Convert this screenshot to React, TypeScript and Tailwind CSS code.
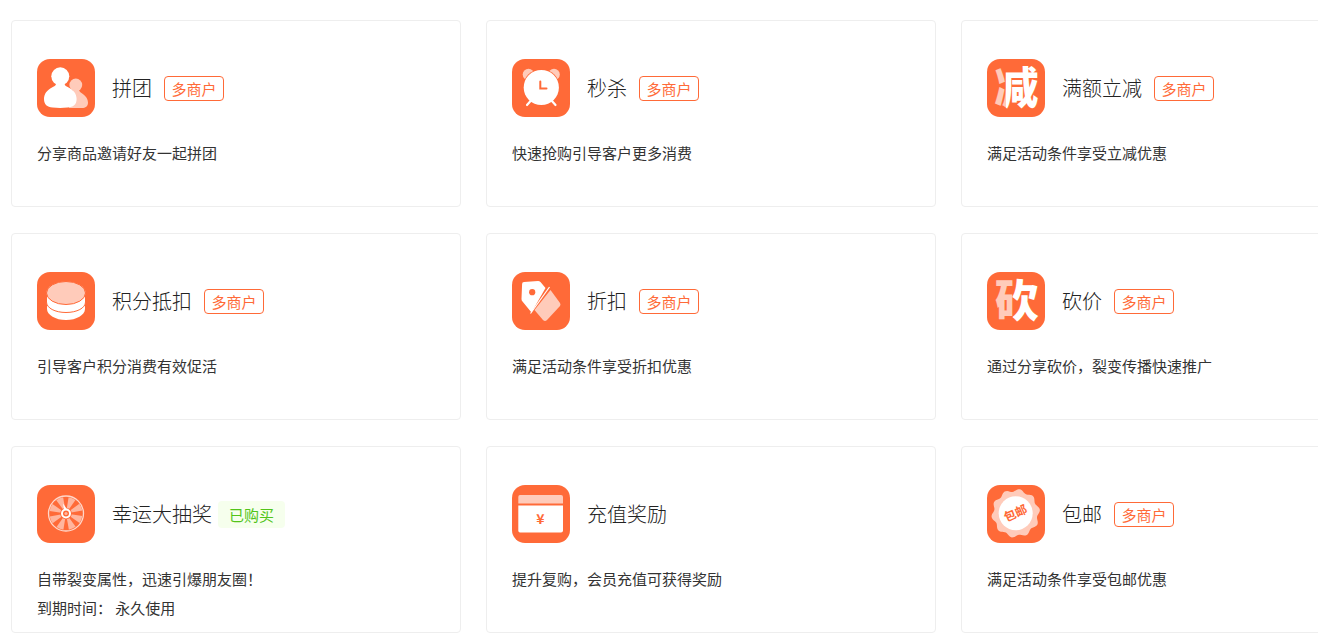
import React from 'react';

type Tag = 'multi' | 'bought';

interface Feature {
    title: string;
    lines: string[];
    icon: React.ReactNode;
    tag?: Tag;
}

// --- Icons ---

const ORANGE = '#ff6a38';
const PINK = '#ffcbba';

const IconTile: React.FC<{ children: React.ReactNode }> = ({ children }) => (
    <svg viewBox="0 0 58 58" className="size-[58px] shrink-0 overflow-visible" aria-hidden="true">
        <rect width="58" height="58" rx="13" fill={ORANGE} />
        {children}
    </svg>
);

const GroupIcon = () => (
    <IconTile>
        <circle cx="38.8" cy="26" r="6.4" fill={PINK} />
        <path d="M36 31h6c0 3 9 5 9 12.500c0 4-2.500 5.500-6 5.500h-13z" fill={PINK} />
        <circle cx="23.300" cy="17.300" r="9" fill="#fff" />
        <path d="M19 23h8.600c0 3.500 0 3.500 4 5.500c5 2.500 8 6.500 8 11.500c0 6-3.500 8-9 8.600q-7.500.8-15 0c-5.500-.6-8.600-3-8.600-8.600c0-5 3-9 8-11.500c4-2 4-2 4-5.500z" fill="#fff" />
    </IconTile>
);

const ClockIcon = () => (
    <IconTile>
        <circle cx="16.5" cy="15.500" r="5.800" fill={PINK} />
        <circle cx="42" cy="15.500" r="5.800" fill={PINK} />
        <circle cx="29.300" cy="28.500" r="18.500" fill={ORANGE} />
        <path d="M15 46l4-4.500M43.500 46l-4-4.500" stroke="#fff" strokeWidth="2.200" strokeLinecap="round" />
        <circle cx="29.300" cy="28.500" r="17.600" fill="#fff" />
        <path d="M28.300 22.500v7h6.200" fill="none" stroke={ORANGE} strokeWidth="2" strokeLinecap="round" />
    </IconTile>
);

// One heavy character, its left part tinted
const CharIcon: React.FC<{ id: string; char: string; split: string }> = ({ id, char, split }) => (
    <IconTile>
        <defs>
            <linearGradient id={id}>
                <stop offset={split} stopColor={PINK} />
                <stop offset={split} stopColor="#fff" />
            </linearGradient>
        </defs>
        <text x="29.500" y="45" textAnchor="middle" fill={`url(#${id})`} className="text-[44px] font-black">{char}</text>
    </IconTile>
);

const CoinsIcon = () => (
    <IconTile>
        <path d="M10 29v8c0 6 8.500 11 19 11s19-5 19-11v-8z" fill="#fff" />
        <path d="M9.500 22v8c0 6 8.500 10.500 19.500 10.500s19.500-4.500 19.500-10.500v-8z" fill="#fff" stroke={ORANGE} />
        <ellipse cx="29" cy="21" rx="19.500" ry="11.500" fill={PINK} stroke={ORANGE} />
    </IconTile>
);

const DiscountIcon = () => (
    <IconTile>
        <path d="M12 10l14-1q1.500 0 2.500 1l5 6-14 24.500-9-11q-1-1-1-2.500l.6-15q0-2 1.900-2z" fill="#fff" />
        <path d="M37.500 15l-19 26.500" stroke="#fff" strokeWidth="1.200" />
        <path d="M38.500 18l9.500 13q1 1.500 0 3L35 48q-2 2-4 0l-8.500-10z" fill={PINK} />
        <circle cx="20.200" cy="20.200" r="3.100" fill={ORANGE} />
    </IconTile>
);

const WheelIcon = () => (
    <IconTile>
        <circle cx="29" cy="28.500" r="17.500" fill="none" stroke="#ffd7ca" strokeWidth="1.300" />
        {[0, 45, 90, 135, 180, 225, 270, 315].map((angle) => (
            <path key={angle} d="M29 28.500l-3.700-16.100a16.500 16.500 0 0 1 7.400 0z" fill="#ffb59e" transform={`rotate(${angle + 22} 29 28.500)`} />
        ))}
        <circle cx="29" cy="28.500" r="5.800" fill={ORANGE} />
        <path d="M26 18.500l4.500 6.500h-3.500z" fill="#fff" />
        <circle cx="29" cy="28.500" r="4" fill="none" stroke="#fff" strokeWidth="2" />
        <circle cx="29" cy="28.500" r="1.600" fill="#ffb59e" />
    </IconTile>
);

const RechargeIcon = () => (
    <IconTile>
        <path d="M8 10h41q2 0 2 2v6.500H6.300v-6.500q0-2 1.700-2z" fill={PINK} />
        <path d="M6.300 20.500H51v25q0 2-2 2H8q-1.700 0-1.700-2z" fill="#fff" />
        <text x="28.500" y="38.500" textAnchor="middle" fill={ORANGE} className="text-[14px] font-bold">¥</text>
    </IconTile>
);

// Wavy outline of the postage badge, ten lobes
const badgePoints = Array.from({ length: 120 }, (_, i) => {
    const angle = (i * Math.PI) / 60;
    const radius = 23 + 1.4 * Math.cos(angle * 10 + 1.5);
    return `${28.7 + radius * Math.cos(angle)},${28.3 + radius * Math.sin(angle)}`;
}).join(' ');

const PostageIcon = () => (
    <IconTile>
        <polygon points={badgePoints} fill={PINK} />
        <circle cx="28.700" cy="28.300" r="17" fill="#fff" />
        <text x="28.700" y="32.500" textAnchor="middle" fill={ORANGE} transform="rotate(-24 28.700 28.500)" className="text-[12px] font-bold">包邮</text>
    </IconTile>
);

// --- Data ---

const features: Feature[] = [
    { title: '拼团', lines: ['分享商品邀请好友一起拼团'], icon: <GroupIcon />, tag: 'multi' },
    { title: '秒杀', lines: ['快速抢购引导客户更多消费'], icon: <ClockIcon />, tag: 'multi' },
    { title: '满额立减', lines: ['满足活动条件享受立减优惠'], icon: <CharIcon id="reduce" char="减" split="27%" />, tag: 'multi' },
    { title: '积分抵扣', lines: ['引导客户积分消费有效促活'], icon: <CoinsIcon />, tag: 'multi' },
    { title: '折扣', lines: ['满足活动条件享受折扣优惠'], icon: <DiscountIcon />, tag: 'multi' },
    { title: '砍价', lines: ['通过分享砍价，裂变传播快速推广'], icon: <CharIcon id="bargain" char="砍" split="42%" />, tag: 'multi' },
    { title: '幸运大抽奖', lines: ['自带裂变属性，迅速引爆朋友圈！', '到期时间： 永久使用'], icon: <WheelIcon />, tag: 'bought' },
    { title: '充值奖励', lines: ['提升复购，会员充值可获得奖励'], icon: <RechargeIcon /> },
    { title: '包邮', lines: ['满足活动条件享受包邮优惠'], icon: <PostageIcon />, tag: 'multi' },
];

// --- UI Components ---

const FeatureTag: React.FC<{ tag: Tag }> = ({ tag }) => {
    if (tag === 'bought') {
        return <span className="ml-1.5 rounded bg-[#f6ffed] px-[11px] text-[15px] leading-[27px] text-[#52c41a]">已购买</span>;
    }
    return <span className="ml-3 w-[60px] rounded border border-[#ff6a38] text-center text-[15px] leading-[23px] text-[#ff6a38]">多商户</span>;
};

const FeatureCard: React.FC<{ feature: Feature }> = ({ feature }) => (
    <article className="rounded border border-[#eee] px-[25px] pt-[38px] pb-[10px]">
        <div className="flex items-center">
            {feature.icon}
            <h2 className="ml-[17px] text-[20px] leading-[30px] font-light text-[#222]">{feature.title}</h2>
            {feature.tag && <FeatureTag tag={feature.tag} />}
        </div>
        <div className="mt-[21px] text-[15px] leading-[29px]">
            {feature.lines.map((line) => (
                <p key={line}>{line}</p>
            ))}
        </div>
    </article>
);

export default function App() {
    return (
        <main className="overflow-x-hidden bg-white pt-5 pb-2.5 pl-[11px] font-['Noto_Sans_CJK_SC',sans-serif] text-[#333]">
            <div className="grid auto-rows-fr grid-cols-[repeat(3,minmax(450px,1fr))] gap-x-[25px] gap-y-[26px]">
                {features.map((feature) => (
                    <FeatureCard key={feature.title} feature={feature} />
                ))}
            </div>
        </main>
    );
}
